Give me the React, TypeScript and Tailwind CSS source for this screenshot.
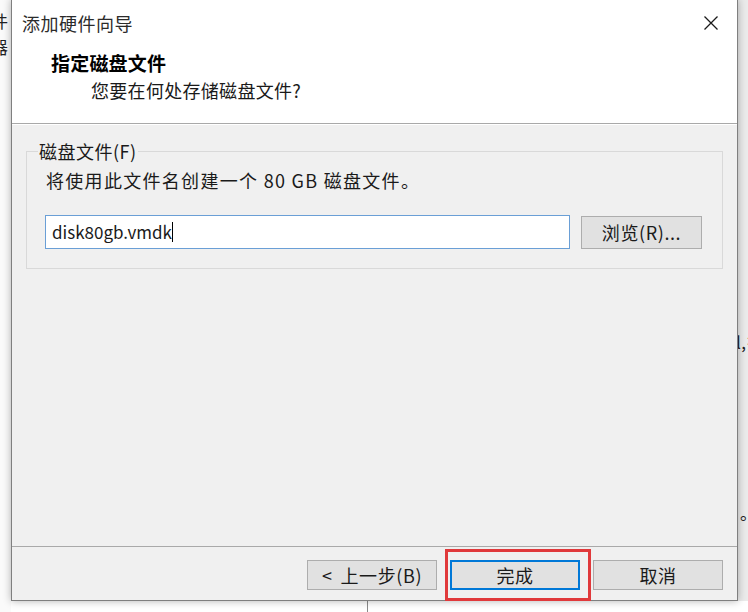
import React from 'react';

const font = "font-['Noto_Sans_CJK_SC','Microsoft_YaHei',sans-serif]";

const CloseIcon = () => (
  <svg width="16" height="16" viewBox="0 0 16 16" className="text-[#1a1a1a]">
    <path d="M1.5 1.5 L14.5 14.5 M14.5 1.5 L1.5 14.5" stroke="currentColor" strokeWidth="1.3" fill="none" />
  </svg>
);

const WinButton: React.FC<{ label: React.ReactNode; primary?: boolean; className?: string }> = ({ label, primary = false, className = '' }) => (
  <button
    className={`h-[30px] w-[130px] flex items-center justify-center bg-[#e1e1e1] text-[18px] leading-none tracking-[0.6px] text-[#1a1a1a] ${
      primary ? 'border-2 border-[#0078d7]' : 'border border-[#adadad]'
    } ${className}`}
  >
    {label}
  </button>
);

export default function App() {
  return (
    <div className={`relative w-[748px] h-[612px] overflow-hidden bg-white tracking-[0.5px] ${font}`}>
      {/* window behind the dialog */}
      <div className="absolute left-0 top-0 w-[11px] h-full bg-[#fafafa]" />
      <span className="absolute left-[-9px] top-[10px] text-[17px] leading-[22px] text-[#222]">件</span>
      <span className="absolute left-[-9px] top-[36px] text-[17px] leading-[22px] text-[#222]">器</span>
      <div className="absolute right-0 top-0 w-[11px] h-[601px] bg-[#ebebeb]" />
      <span className="absolute left-[736px] top-[331px] text-[17px] leading-[22px] text-[#222] whitespace-nowrap">l,扌</span>
      <span className="absolute left-[740px] top-[502px] text-[17px] leading-[22px] text-[#222]">。</span>
      <div className="absolute left-[367px] top-[600px] w-px h-[12px] bg-[#8a8a8a]" />

      {/* dialog */}
      <div className="absolute left-[11px] top-[-1px] w-[727px] h-[602px] flex flex-col border border-[#7f7f7f] bg-[#f0f0f0] shadow-[0_0_8px_rgba(0,0,0,0.3)]">
        <div className="h-[124px] bg-white flex flex-col border-b border-[#a9a9a9]">
          <div className="flex items-center justify-between pt-[11px] pl-[10px] pr-[18px]">
            <span className="text-[18px] leading-[24px] text-[#2b2b2b]">添加硬件向导</span>
            <CloseIcon />
          </div>
          <div className="mt-[16px] pl-[39px] text-[19px] leading-[24px] tracking-[0.2px] font-bold text-black">指定磁盘文件</div>
          <div className="mt-[3px] pl-[79px] text-[18px] leading-[24px] tracking-[0.3px] text-[#1a1a1a]">您要在何处存储磁盘文件?</div>
        </div>

        <div className="flex-1 px-[14px] border-t border-white">
          <fieldset className="mt-[14px] border border-[#d9d9d9] pb-[19px]">
            <legend className="ml-[11px] px-[1px] text-[18px] leading-[24px] text-[#1a1a1a]">磁盘文件(F)</legend>
            <div className="mt-[6px] pl-[19px] text-[18px] leading-[22px] tracking-[1.3px] text-[#1a1a1a] whitespace-nowrap">
              将使用此文件名创建一个 80 GB 磁盘文件。
            </div>
            <div className="mt-[24px] pl-[18px] flex items-center gap-[11px]">
              <div className="w-[525px] h-[34px] flex items-center bg-white border border-[#6a9fd6] pl-[6px] text-[17px] tracking-normal text-[#1a1a1a]">
                <span>disk80gb.vmdk</span>
                <span className="w-px h-[20px] bg-black" />
              </div>
              <WinButton label="浏览(R)..." className="!h-[33px] !w-[121px]" />
            </div>
          </fieldset>
        </div>

        <div className="h-[54px] border-t border-[#a9a9a9] flex justify-end gap-[13px] pt-[13px] pr-[14px]">
          <WinButton label={<><span className="mr-[8px]">&lt;</span>上一步(B)</>} />
          <WinButton label="完成" primary />
          <WinButton label="取消" />
        </div>
      </div>

      {/* highlight annotation */}
      <div className="absolute left-[445px] top-[549px] w-[146px] h-[52px] border-[3px] border-[#e0393b]" />
    </div>
  );
}
